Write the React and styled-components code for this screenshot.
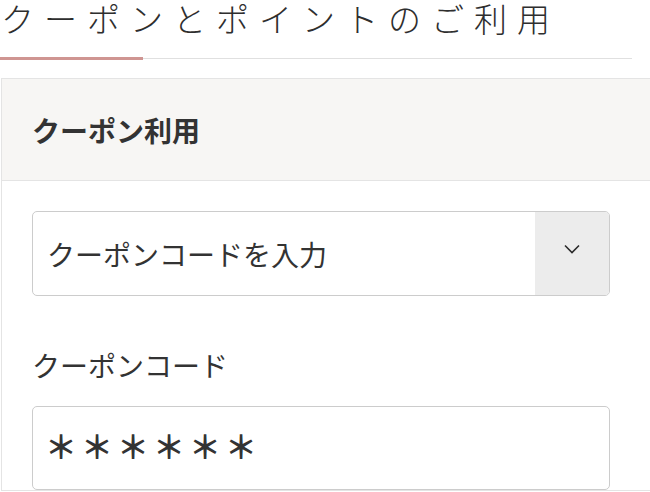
import styled, { createGlobalStyle } from 'styled-components';

const GlobalStyle = createGlobalStyle`
  *, *::before, *::after {
    box-sizing: border-box;
  }
  html, body {
    margin: 0;
    padding: 0;
    background: #fff;
    overflow: hidden;
  }
  body {
    font-family: "Noto Sans CJK JP", "Noto Sans", sans-serif;
    color: #333;
  }
`;

const Page = styled.div`
  width: 650px;
  height: 492px;
  overflow: hidden;
`;

const Heading = styled.div`
  position: relative;
  width: 632px;
  height: 59px;
  border-bottom: 1px solid #e0e0e0;
  margin-bottom: 19px;

  &::after {
    content: '';
    position: absolute;
    left: 0;
    bottom: -2px;
    width: 143px;
    height: 3px;
    background: #cf9592;
  }
`;

const Title = styled.h1`
  margin: 0;
  padding-left: 1px;
  font-size: 33px;
  font-weight: 300;
  line-height: 36px;
  letter-spacing: 10px;
  color: #2e2e2e;
  white-space: nowrap;
`;

const Card = styled.section`
  width: 700px;
  border: 1px solid #e4e4e4;
  border-right: none;
  margin-left: 1px;
`;

const CardHeader = styled.div`
  height: 102px;
  display: flex;
  align-items: center;
  padding: 0 30px;
  background: #f7f6f4;
  border-bottom: 1px solid #e4e4e4;
  font-size: 28px;
  font-weight: 700;
  color: #333;
`;

const CardBody = styled.div`
  padding: 30px 30px 0;
  width: 638px;
  display: flex;
  flex-direction: column;
`;

const SelectBox = styled.div`
  height: 85px;
  display: flex;
  border: 1px solid #cccccc;
  border-radius: 5px;
  overflow: hidden;
`;

const SelectText = styled.div`
  flex: 1;
  display: flex;
  align-items: center;
  padding-left: 14px;
  font-size: 28px;
  color: #333;
`;

const SelectArrow = styled.div`
  width: 74px;
  display: flex;
  align-items: center;
  justify-content: center;
  background: #ececec;
  padding-bottom: 10px;
`;

const Label = styled.div`
  margin-top: 51px;
  font-size: 28px;
  line-height: 36px;
  color: #333;
`;

const TextField = styled.div`
  margin-top: 23px;
  height: 84px;
  display: flex;
  align-items: center;
  padding-left: 12px;
  padding-bottom: 6px;
  border: 1px solid #cccccc;
  border-radius: 5px;
  font-size: 32px;
  font-weight: 700;
  letter-spacing: 4px;
  color: #333;
`;

export default function App() {
  return (
    <Page>
      <GlobalStyle />
      <Heading>
        <Title>クーポンとポイントのご利用</Title>
      </Heading>
      <Card>
        <CardHeader>クーポン利用</CardHeader>
        <CardBody>
          <SelectBox>
            <SelectText>クーポンコードを入力</SelectText>
            <SelectArrow>
              <svg width="16" height="10" viewBox="0 0 16 10">
                <path d="M1 1.5 L8 8.5 L15 1.5" fill="none" stroke="#2b2b2b" strokeWidth="1.6" />
              </svg>
            </SelectArrow>
          </SelectBox>
          <Label>クーポンコード</Label>
          <TextField>＊＊＊＊＊＊</TextField>
        </CardBody>
      </Card>
    </Page>
  );
}
